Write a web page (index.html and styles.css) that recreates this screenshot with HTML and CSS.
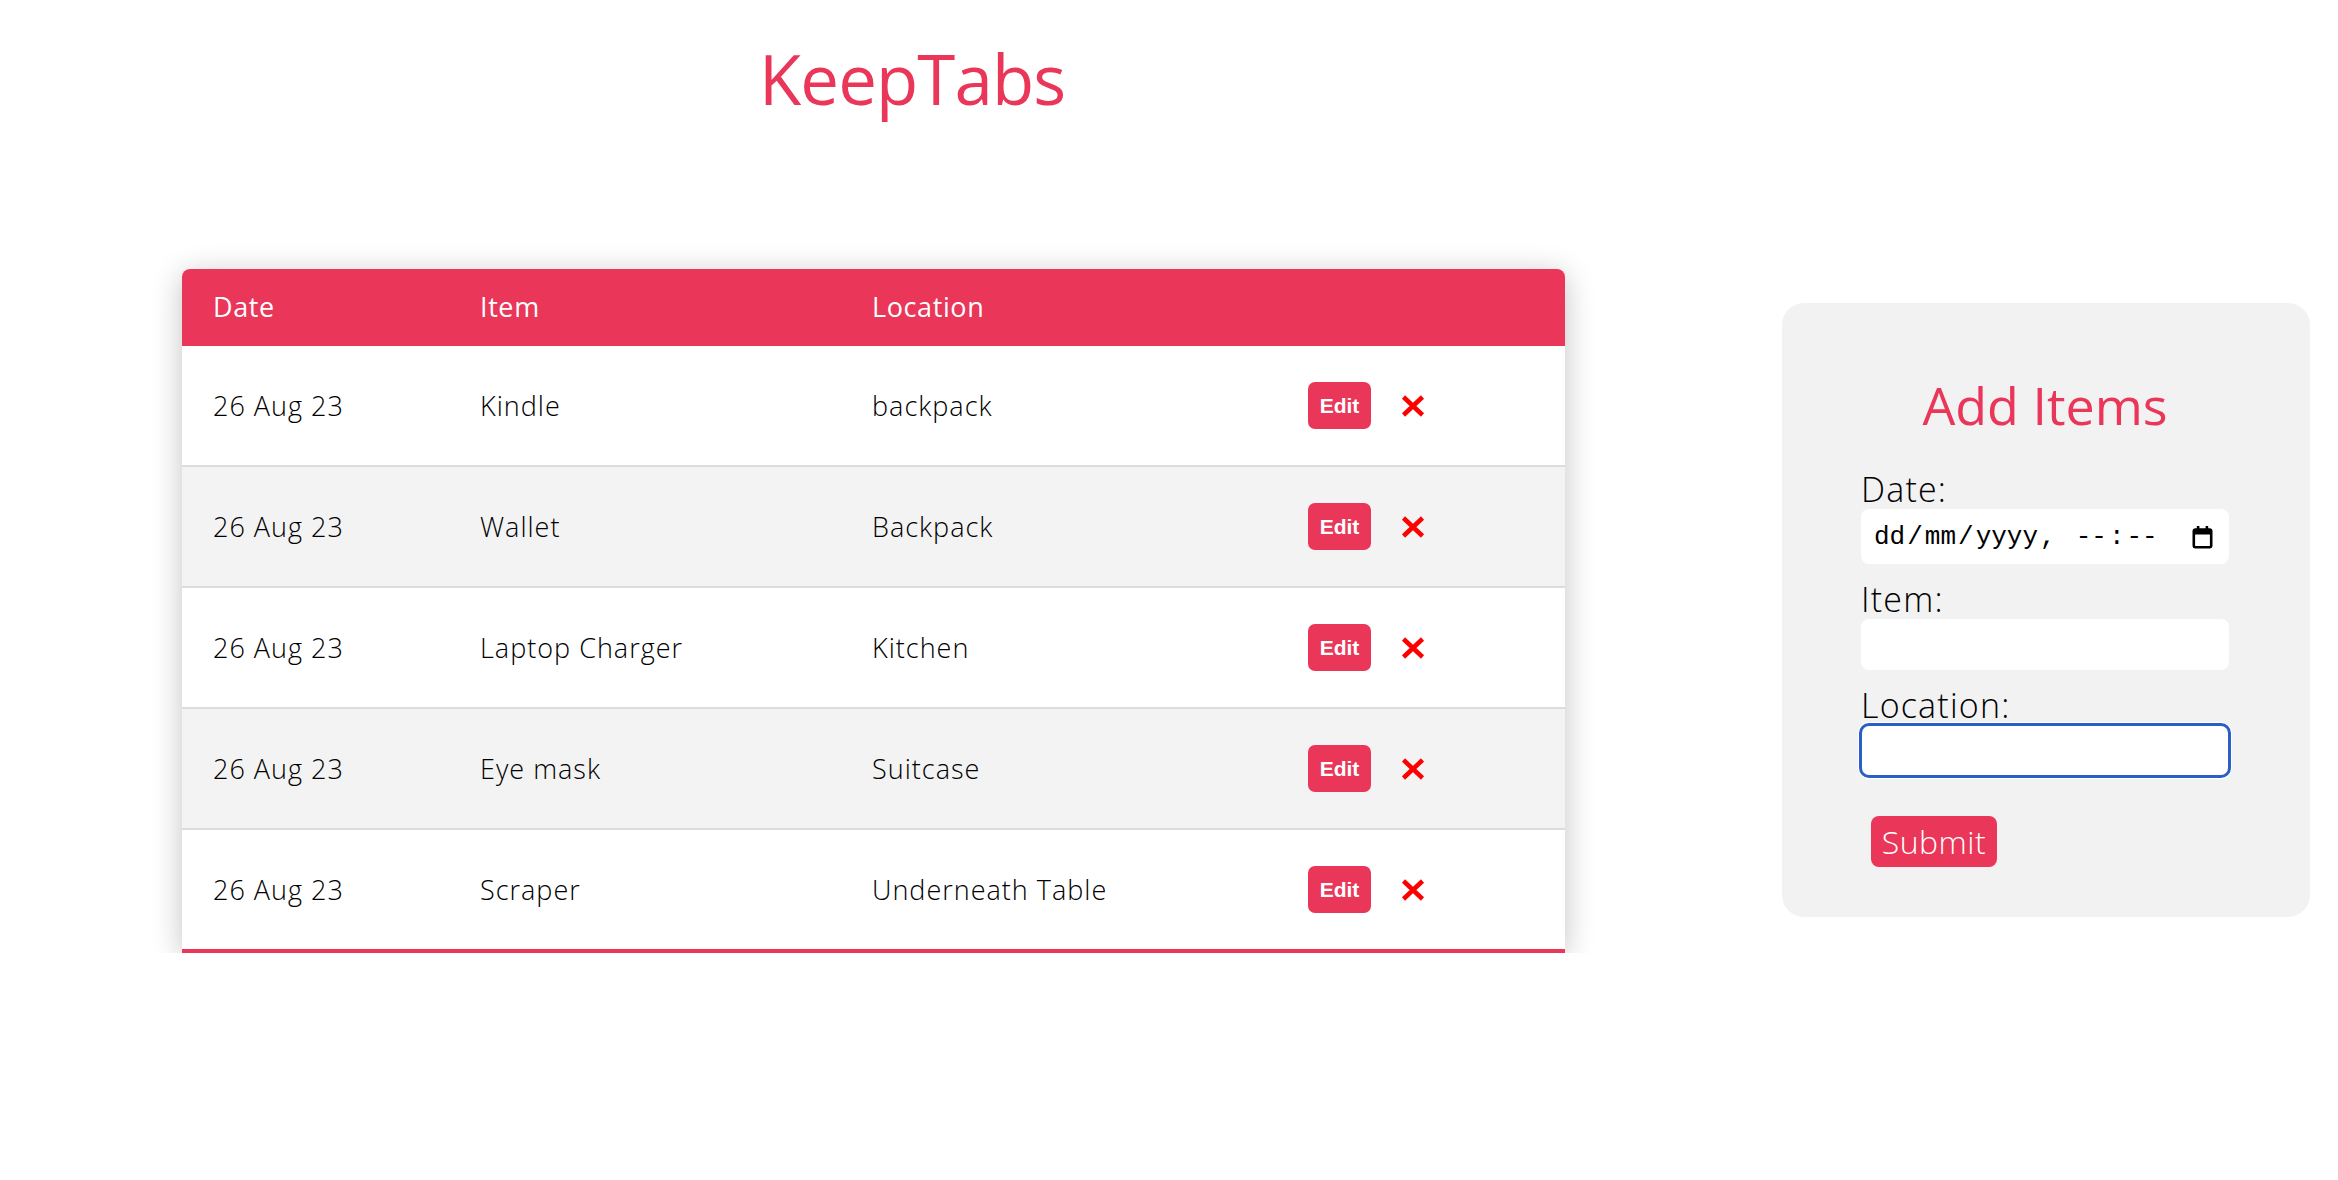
FILE: index.html
```html
<!DOCTYPE html>
<html lang="en">
<head>
<meta charset="utf-8">
<title>KeepTabs</title>
<link rel="stylesheet" href="styles.css">
</head>
<body>
<header class="top">
  <h1 class="logo">KeepTabs</h1>
</header>
<main class="layout">
  <div class="table-wrap">
    <table class="tabs-table">
      <colgroup>
        <col class="c-date"><col class="c-item"><col class="c-loc"><col class="c-act">
      </colgroup>
      <thead>
        <tr><th>Date</th><th>Item</th><th>Location</th><th></th></tr>
      </thead>
      <tbody>
        <tr><td>26 Aug 23</td><td>Kindle</td><td>backpack</td><td><div class="actions"><button class="edit-btn">Edit</button><svg class="del" width="24" height="22" viewBox="0 0 24 22"><path d="M2.5 2L21.5 20M21.5 2L2.5 20" stroke="#f00" stroke-width="4.5"/></svg></div></td></tr>
        <tr><td>26 Aug 23</td><td>Wallet</td><td>Backpack</td><td><div class="actions"><button class="edit-btn">Edit</button><svg class="del" width="24" height="22" viewBox="0 0 24 22"><path d="M2.5 2L21.5 20M21.5 2L2.5 20" stroke="#f00" stroke-width="4.5"/></svg></div></td></tr>
        <tr><td>26 Aug 23</td><td>Laptop Charger</td><td>Kitchen</td><td><div class="actions"><button class="edit-btn">Edit</button><svg class="del" width="24" height="22" viewBox="0 0 24 22"><path d="M2.5 2L21.5 20M21.5 2L2.5 20" stroke="#f00" stroke-width="4.5"/></svg></div></td></tr>
        <tr><td>26 Aug 23</td><td>Eye mask</td><td>Suitcase</td><td><div class="actions"><button class="edit-btn">Edit</button><svg class="del" width="24" height="22" viewBox="0 0 24 22"><path d="M2.5 2L21.5 20M21.5 2L2.5 20" stroke="#f00" stroke-width="4.5"/></svg></div></td></tr>
        <tr><td>26 Aug 23</td><td>Scraper</td><td>Underneath Table</td><td><div class="actions"><button class="edit-btn">Edit</button><svg class="del" width="24" height="22" viewBox="0 0 24 22"><path d="M2.5 2L21.5 20M21.5 2L2.5 20" stroke="#f00" stroke-width="4.5"/></svg></div></td></tr>
      </tbody>
    </table>
  </div>
  <section class="card">
    <h2 class="card-title">Add Items</h2>
    <form class="add-form">
      <label class="lbl">Date:</label>
      <div class="field date-field">
        <span class="dt"><span>dd</span><span>/</span><span>mm</span><span>/</span><span>yyyy</span><span>,</span><span class="sp"> </span><span>--</span><span>:</span><span>--</span></span>
        <svg class="cal" width="21" height="24" viewBox="0 0 21 24"><rect x="1.8" y="4.5" width="17.4" height="17.7" rx="1.6" fill="none" stroke="#000" stroke-width="2.6"/><rect x="1.8" y="4.5" width="17.4" height="5" fill="#000"/><rect x="4.8" y="1" width="2.6" height="4.5" fill="#000"/><rect x="13.6" y="1" width="2.6" height="4.5" fill="#000"/></svg>
      </div>
      <label class="lbl">Item:</label>
      <input class="field" type="text">
      <label class="lbl">Location:</label>
      <input class="field focused" type="text">
      <button class="submit-btn" type="button">Submit</button>
    </form>
  </section>
</main>
</body>
</html>
```
FILE: styles.css
```css
html, body {
  margin: 0;
  padding: 0;
  background: #fff;
}
body {
  font-family: "Open Sans", "Lato", sans-serif;
  font-weight: 300;
  color: #000;
}
.top {
  padding: 0 0 0 759px;
  height: 269px;
}
.logo {
  margin: 0;
  padding-top: 32px;
  font-size: 69px;
  line-height: 92px;
  font-weight: 500;
  color: #ea3659;
  letter-spacing: -0.9px;
}
.layout {
  display: flex;
  align-items: flex-start;
  padding-left: 182px;
}
.table-wrap {
  border-radius: 8px 8px 0 0;
  box-shadow: 0 5px 30px rgba(0, 0, 0, 0.24);
}
.tabs-table {
  width: 1383px;
  border-collapse: collapse;
  table-layout: fixed;
  font-size: 27px;
  letter-spacing: 1px;
}
.c-date { width: 267px; }
.c-item { width: 392px; }
.c-loc { width: 436px; }
.c-act { width: 288px; }
.tabs-table thead tr {
  background: #ea3659;
  color: #fff;
}
.tabs-table th {
  height: 74px;
  padding: 0 31px 3px;
  text-align: left;
  font-weight: 400;
  letter-spacing: 0.6px;
  vertical-align: middle;
}
.tabs-table th:first-child { border-top-left-radius: 8px; }
.tabs-table th:last-child { border-top-right-radius: 8px; }
.tabs-table td {
  height: 119px;
  padding: 0 31px;
  vertical-align: middle;
  color: #000;
}
.tabs-table tbody tr {
  border-bottom: 2px solid #dcdcdc;
}
.tabs-table tbody tr:nth-of-type(even) {
  background: #f3f3f3;
}
.tabs-table tbody tr:last-of-type {
  border-bottom: 4px solid #ea3659;
}
.actions {
  display: flex;
  align-items: center;
  gap: 30px;
}
.edit-btn {
  width: 63px;
  height: 47px;
  padding: 0;
  border: 0;
  border-radius: 7px;
  background: #ea3659;
  color: #fff;
  font-family: "Liberation Sans", Arial, sans-serif;
  font-weight: 700;
  font-size: 21px;
  letter-spacing: 0;
}
.del { display: block; }
.card {
  margin-left: 217px;
  margin-top: 34px;
  width: 528px;
  box-sizing: border-box;
  padding: 71px 81px 50px 79px;
  background: #f2f2f2;
  border-radius: 22px;
}
.card-title {
  margin: 0 0 33px;
  text-align: center;
  font-size: 52px;
  line-height: 62px;
  font-weight: 400;
  color: #ea3659;
}
.add-form {
  display: flex;
  flex-direction: column;
  align-items: flex-start;
}
.lbl {
  display: block;
  font-size: 34px;
  line-height: 40px;
  letter-spacing: 1.2px;
  color: #000;
}
.field {
  width: 368px;
  height: 51px;
  box-sizing: border-box;
  border: 0;
  border-radius: 8px;
  background: #fff;
  margin: 0 0 15px;
  padding: 0 12px;
  font-size: 20px;
}
.date-field {
  height: 55px;
  display: flex;
  align-items: center;
  justify-content: space-between;
  padding: 0 16px 0 12px;
}
.dt {
  font-family: "Liberation Mono", "Courier New", monospace;
  font-size: 26px;
  font-weight: 400;
  color: #000;
  display: flex;
}
.dt span { margin: 0 1px; }
.dt .sp { width: 16px; }
.cal { display: block; }
.focused {
  outline: 3px solid #2a5fc7;
  outline-offset: -1px;
  box-shadow: 0 0 0 3px #fff;
}
.submit-btn {
  margin: 25px 0 0 10px;
  width: 126px;
  height: 51px;
  border: 0;
  border-radius: 8px;
  background: #ea3659;
  color: #fff;
  font-family: "Open Sans", sans-serif;
  font-weight: 300;
  font-size: 32px;
  letter-spacing: 0.5px;
  padding: 0;
}
```
